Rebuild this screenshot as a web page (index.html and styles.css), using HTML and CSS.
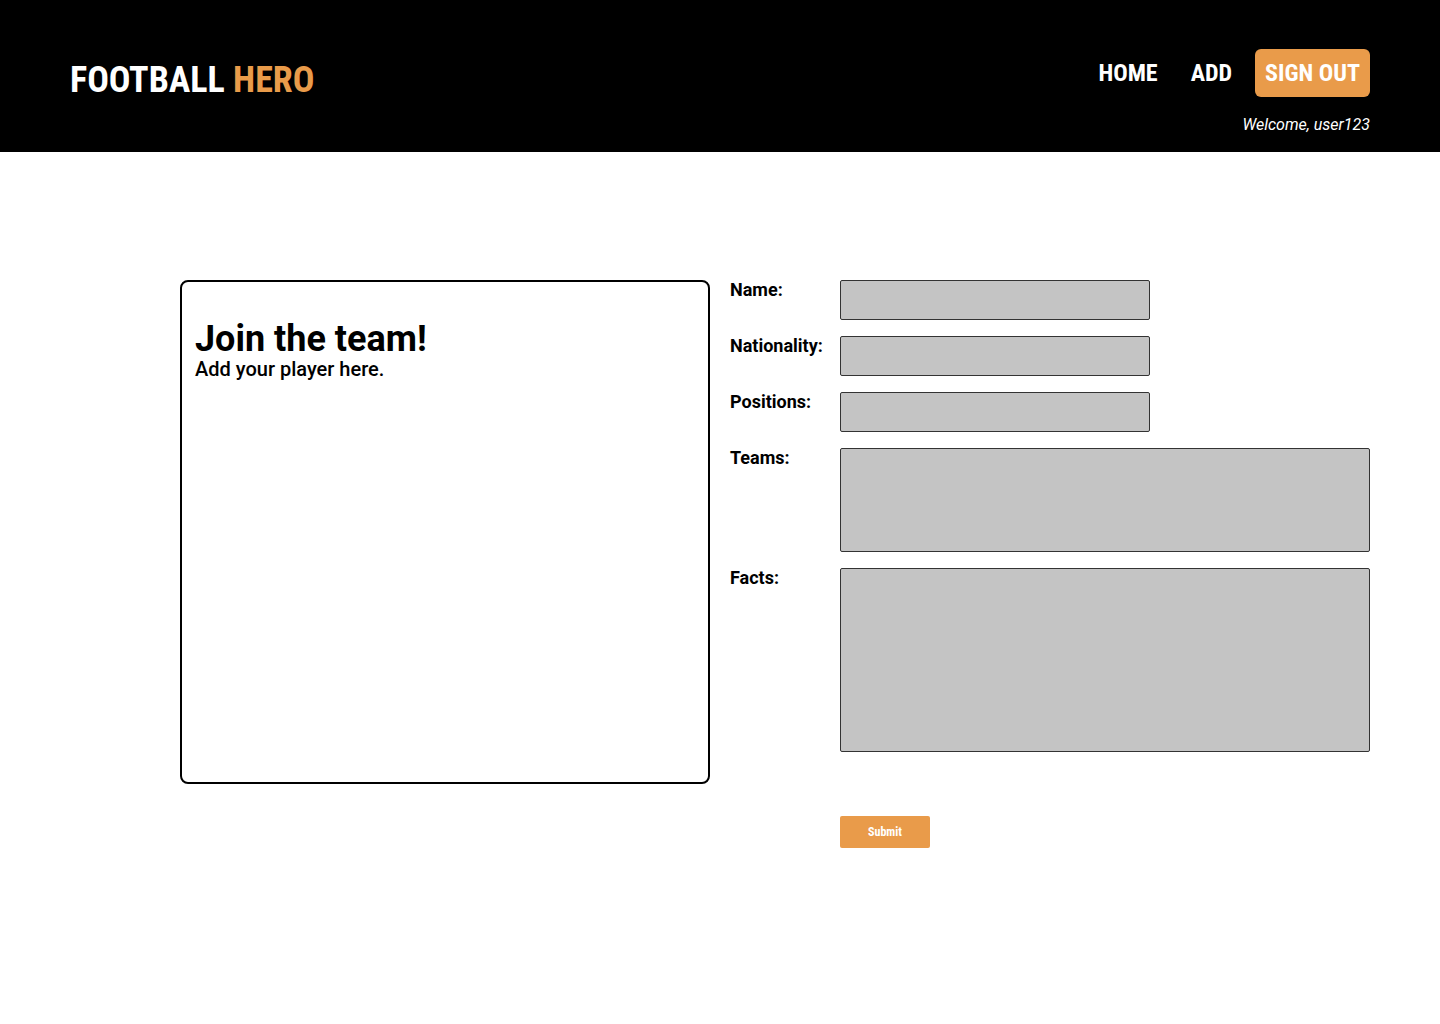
FILE: index.html
```html
<!DOCTYPE html>
<html lang="en">
<head>
<meta charset="utf-8">
<title>Football Hero - Add</title>
<link rel="stylesheet" href="styles.css">
</head>
<body>
<header class="topbar">
  <div class="logo">FOOTBALL <span class="accent">HERO</span></div>
  <div class="nav-area">
    <nav class="nav">
      <a class="nav-link" href="#">HOME</a>
      <a class="nav-link" href="#">ADD</a>
      <a class="nav-btn" href="#">SIGN OUT</a>
    </nav>
    <div class="welcome">Welcome, user123</div>
  </div>
</header>
<main class="main">
  <section class="card">
    <h1 class="card-title">Join the team!</h1>
    <p class="card-sub">Add your player here.</p>
  </section>
  <form class="form">
    <label class="label">Name:</label>
    <input class="field short" type="text">
    <label class="label">Nationality:</label>
    <input class="field short" type="text">
    <label class="label">Positions:</label>
    <input class="field short" type="text">
    <label class="label">Teams:</label>
    <textarea class="field teams"></textarea>
    <label class="label">Facts:</label>
    <textarea class="field facts"></textarea>
    <span></span>
    <button class="submit" type="button">Submit</button>
  </form>
</main>
</body>
</html>
```
FILE: styles.css
```css
* { box-sizing: border-box; }
body {
  margin: 0;
  font-family: Roboto, "Noto Sans", sans-serif;
  background: #fff;
  color: #000;
}
.topbar {
  background: #000;
  height: 152px;
  display: flex;
  justify-content: space-between;
  padding: 49px 70px 0 70px;
}
.logo {
  font-family: "Roboto Condensed", Roboto, sans-serif;
  font-stretch: condensed;
  font-weight: 700;
  font-size: 36px;
  color: #fff;
  margin-top: 10px;
  line-height: 42px;
}
.accent { color: #E99B4A; }
.nav-area {
  display: flex;
  flex-direction: column;
  align-items: flex-end;
}
.nav {
  display: flex;
  align-items: center;
  gap: 33px;
}
.nav-link, .nav-btn {
  font-family: "Roboto Condensed", Roboto, sans-serif;
  font-stretch: condensed;
  font-weight: 700;
  font-size: 24px;
  color: #fff;
  text-decoration: none;
}
.nav-btn {
  background: #E99B4A;
  height: 48px;
  line-height: 48px;
  padding: 0 10px;
  border-radius: 6px;
  margin-left: -10px;
}
.welcome {
  color: #fff;
  font-style: italic;
  font-size: 16px;
  margin-top: 18px;
}
.main {
  display: flex;
  gap: 20px;
  padding: 128px 70px 0 180px;
}
.card {
  width: 530px;
  height: 504px;
  border: 2px solid #000;
  border-radius: 8px;
  padding: 38px 13px;
}
.card-title {
  margin: 0;
  font-size: 36px;
  font-weight: 700;
  line-height: 38px;
}
.card-sub {
  margin: 0;
  font-size: 20px;
  font-weight: 500;
  line-height: 22px;
}
.form {
  flex: 1;
  display: grid;
  grid-template-columns: 110px 1fr;
  row-gap: 16px;
  align-items: start;
}
.label {
  font-weight: 700;
  font-size: 18px;
  line-height: 20px;
}
.field {
  background: #C4C4C4;
  border: 1px solid #333;
  border-radius: 2px;
  display: block;
  font: inherit;
  resize: none;
  margin: 0;
}
.short { width: 310px; height: 40px; }
.teams { width: 100%; height: 104px; }
.facts { width: 100%; height: 184px; }
.submit {
  margin-top: 48px;
  width: 90px;
  height: 32px;
  background: #E99B4A;
  color: #fff;
  border: none;
  border-radius: 2px;
  font-family: "Roboto Condensed", Roboto, sans-serif;
  font-weight: 700;
  font-size: 12px;
}
```
